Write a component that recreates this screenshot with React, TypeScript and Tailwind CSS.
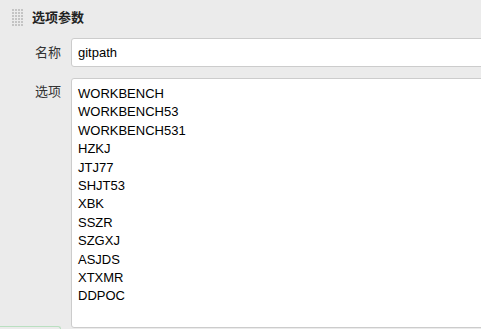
const options = [
  "WORKBENCH",
  "WORKBENCH53",
  "WORKBENCH531",
  "HZKJ",
  "JTJ77",
  "SHJT53",
  "XBK",
  "SSZR",
  "SZGXJ",
  "ASJDS",
  "XTXMR",
  "DDPOC",
];

function Grip() {
  const dots = [];
  for (let r = 0; r < 6; r++) {
    for (let c = 0; c < 4; c++) {
      dots.push(<rect key={`${r}-${c}`} x={c * 3} y={r * 3} width={2} height={2} fill="#c4c4c4" />);
    }
  }
  return (
    <svg width="12" height="18" viewBox="0 0 12 18" className="shrink-0">
      {dots}
    </svg>
  );
}

export default function App() {
  return (
    <div
      className="w-[481px] h-[329px] overflow-hidden bg-[#ebebeb] text-[13px] text-[#333]"
      style={{ fontFamily: '"Liberation Sans", Arial, "Noto Sans CJK SC", sans-serif' }}
    >
      <div className="h-[38px] flex items-start gap-[8px] pl-[12px] pt-[9px]">
        <Grip />
        <span className="font-bold text-[#222] leading-[16px] mt-[1px]">选项参数</span>
      </div>

      <div className="flex">
        <div className="w-[71px] shrink-0 h-[29px] flex items-center justify-end pr-[10px]">名称</div>
        <div className="w-[430px] shrink-0 h-[29px] bg-white border border-[#ccc] rounded-l-[3px] flex items-center pl-[6px] text-black">
          gitpath
        </div>
      </div>

      <div className="flex mt-[11px]">
        <div className="w-[71px] shrink-0 h-[251px] flex flex-col justify-between">
          <div className="pt-[4px] pr-[10px] text-right">选项</div>
          <div className="h-[3px] w-[61px] border-t border-r border-[#b9dfc0] rounded-tr-[6px]" />
        </div>
        <div className="w-[430px] shrink-0 h-[250px] bg-white border border-[#ccc] rounded-l-[3px] pl-[6px] pt-[6px] text-black leading-[18.4px]">
          {options.map((o) => (
            <div key={o}>{o}</div>
          ))}
        </div>
      </div>
    </div>
  );
}
